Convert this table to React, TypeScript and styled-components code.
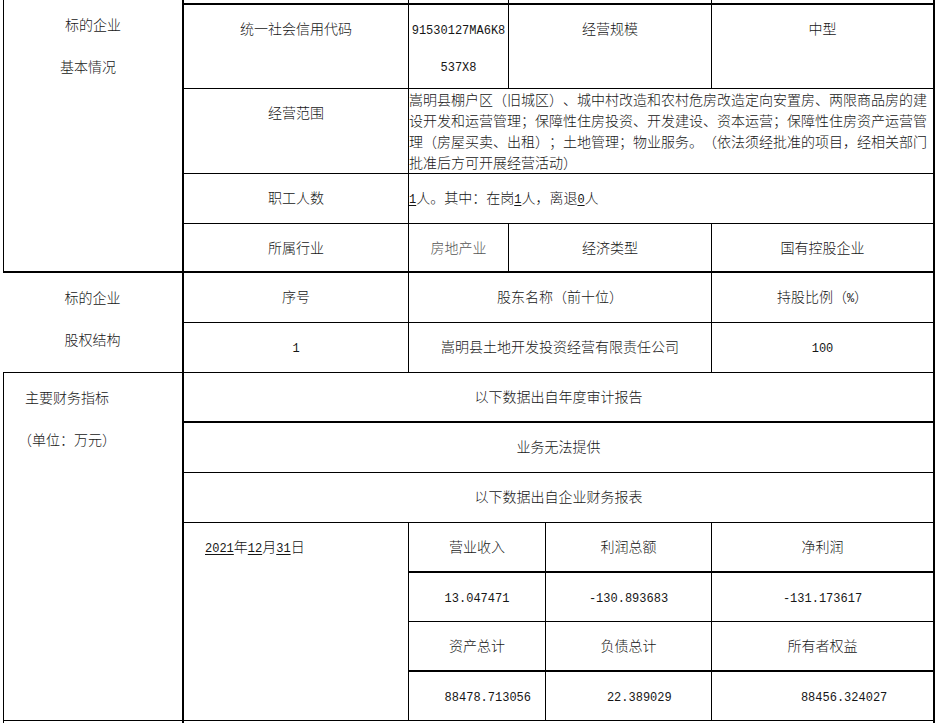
import React from 'react';
import styled, { createGlobalStyle } from 'styled-components';

const Global = createGlobalStyle`
  html, body {
    margin: 0;
    padding: 0;
    background: #ffffff;
    overflow: hidden;
  }
  body {
    font-family: "Noto Sans CJK SC", "Noto Sans", sans-serif;
    font-size: 14px;
    font-weight: 300;
    color: #161616;
    text-spacing-trim: space-all;
  }
`;

const Page = styled.div`
  width: 937px;
  height: 723px;
  box-sizing: border-box;
  padding-left: 3px;
`;

const Sheet = styled.div`
  display: grid;
  grid-template-columns: 181px 225px 100px 37px 166px 223px;
  grid-template-rows: 5px 84px 85px 50px 49px 50px 50px 50px 50px 50px 50px 49px 50px 49px 30px;
`;

type CellProps = {
  $col: string;
  $row: string;
  $left?: number;
  $right?: number;
  $bottom?: number;
};

const Cell = styled.div<CellProps>`
  grid-column: ${p => p.$col};
  grid-row: ${p => p.$row};
  box-sizing: border-box;
  min-width: 0;
  border: 0 solid #000;
  border-left-width: ${p => p.$left ?? 0}px;
  border-right-width: ${p => p.$right ?? 1}px;
  border-bottom-width: ${p => p.$bottom ?? 1}px;
  overflow: hidden;
`;

const Text = styled(Cell)<{ $align?: 'left' | 'center'; $indent?: number }>`
  padding: 6px 0 0 ${p => p.$indent ?? 0}px;
  line-height: 34px;
  text-align: ${p => p.$align ?? 'center'};
  white-space: nowrap;
`;

const Side = styled(Cell)<{ $align?: 'left' | 'center'; $indent?: number }>`
  padding: 3px 0 0 ${p => p.$indent ?? 0}px;
  line-height: 42px;
  text-align: ${p => p.$align ?? 'center'};
  white-space: nowrap;
`;

const SideLine = styled.div<{ $shift?: number }>`
  margin-left: ${p => p.$shift ?? 0}px;
`;

const Prose = styled(Cell)`
  padding: 0;
  line-height: 21px;
  text-align: left;
  white-space: nowrap;
`;

const Num = styled.span<{ $u?: boolean }>`
  font-family: "Liberation Mono", "DejaVu Sans Mono", monospace;
  font-size: 12px;
  font-weight: 400;
  white-space: pre;
  text-decoration: ${p => (p.$u ? 'underline' : 'none')};
  text-underline-offset: 2px;
`;

const Muted = styled.span`
  color: #555;
`;

const Line = styled.div``;

export default function App() {
  return (
    <>
      <Global />
      <Page>
        <Sheet>
          {/* row cut off above the visible area */}
          <Cell $col="2 / 3" $row="1 / 2" $bottom={2} />
          <Cell $col="3 / 4" $row="1 / 2" $bottom={2} />
          <Cell $col="4 / 6" $row="1 / 2" $bottom={2} />
          <Cell $col="6 / 7" $row="1 / 2" $bottom={2} $right={2} />

          {/* 标的企业 基本情况 */}
          <Side $col="1 / 2" $row="1 / 6" $left={1} $right={2} $bottom={2}>
            <SideLine>标的企业</SideLine>
            <SideLine $shift={-10}>基本情况</SideLine>
          </Side>

          <Text $col="2 / 3" $row="2 / 3">统一社会信用代码</Text>
          <Text $col="3 / 4" $row="2 / 3">
            <Line><Num>91530127MA6K8</Num></Line>
            <Line><Num>537X8</Num></Line>
          </Text>
          <Text $col="4 / 6" $row="2 / 3">经营规模</Text>
          <Text $col="6 / 7" $row="2 / 3" $right={2}>中型</Text>

          <Text $col="2 / 3" $row="3 / 4">经营范围</Text>
          <Prose $col="3 / 7" $row="3 / 4" $right={2}>
            <Line>嵩明县棚户区（旧城区）、城中村改造和农村危房改造定向安置房、两限商品房的建</Line>
            <Line>设开发和运营管理；保障性住房投资、开发建设、资本运营；保障性住房资产运营管</Line>
            <Line>理（房屋买卖、出租）；土地管理；物业服务。（依法须经批准的项目，经相关部门</Line>
            <Line>批准后方可开展经营活动）</Line>
          </Prose>

          <Text $col="2 / 3" $row="4 / 5">职工人数</Text>
          <Text $col="3 / 7" $row="4 / 5" $right={2} $align="left">
            <Num $u>1</Num>人。其中：在岗<Num $u>1</Num>人，离退<Num $u>0</Num>人
          </Text>

          <Text $col="2 / 3" $row="5 / 6" $bottom={2}>所属行业</Text>
          <Text $col="3 / 4" $row="5 / 6" $bottom={2}><Muted>房地产业</Muted></Text>
          <Text $col="4 / 6" $row="5 / 6" $bottom={2}>经济类型</Text>
          <Text $col="6 / 7" $row="5 / 6" $bottom={2} $right={2}>国有控股企业</Text>

          {/* 标的企业 股权结构 */}
          <Side $col="1 / 2" $row="6 / 8" $right={2}>
            <SideLine>标的企业</SideLine>
            <SideLine>股权结构</SideLine>
          </Side>

          <Text $col="2 / 3" $row="6 / 7">序号</Text>
          <Text $col="3 / 6" $row="6 / 7">股东名称（前十位）</Text>
          <Text $col="6 / 7" $row="6 / 7" $right={2}>持股比例（<Num>%</Num>）</Text>

          <Text $col="2 / 3" $row="7 / 8"><Num>1</Num></Text>
          <Text $col="3 / 6" $row="7 / 8">嵩明县土地开发投资经营有限责任公司</Text>
          <Text $col="6 / 7" $row="7 / 8" $right={2}><Num>100</Num></Text>

          {/* 主要财务指标 */}
          <Side $col="1 / 2" $row="8 / 15" $left={1} $right={2} $align="left" $indent={21}>
            <SideLine>主要财务指标</SideLine>
            <SideLine $shift={-7}>（单位：万元）</SideLine>
          </Side>

          <Text $col="2 / 7" $row="8 / 9" $right={2} $bottom={2}>以下数据出自年度审计报告</Text>
          <Text $col="2 / 7" $row="9 / 10" $right={2}>业务无法提供</Text>
          <Text $col="2 / 7" $row="10 / 11" $right={2}>以下数据出自企业财务报表</Text>

          <Text $col="2 / 3" $row="11 / 15" $align="left" $indent={21}>
            <Num $u>2021</Num>年<Num $u>12</Num>月<Num $u>31</Num>日
          </Text>

          <Text $col="3 / 5" $row="11 / 12" $bottom={2}>营业收入</Text>
          <Text $col="5 / 6" $row="11 / 12" $bottom={2}>利润总额</Text>
          <Text $col="6 / 7" $row="11 / 12" $bottom={2} $right={2}>净利润</Text>

          <Text $col="3 / 5" $row="12 / 13"><Num>13.047471</Num></Text>
          <Text $col="5 / 6" $row="12 / 13"><Num>-130.893683</Num></Text>
          <Text $col="6 / 7" $row="12 / 13" $right={2}><Num>-131.173617</Num></Text>

          <Text $col="3 / 5" $row="13 / 14" $bottom={2}>资产总计</Text>
          <Text $col="5 / 6" $row="13 / 14" $bottom={2}>负债总计</Text>
          <Text $col="6 / 7" $row="13 / 14" $bottom={2} $right={2}>所有者权益</Text>

          <Text $col="3 / 5" $row="14 / 15"><Num>{'   88478.713056'}</Num></Text>
          <Text $col="5 / 6" $row="14 / 15"><Num>{'   22.389029'}</Num></Text>
          <Text $col="6 / 7" $row="14 / 15" $right={2}><Num>{'      88456.324027'}</Num></Text>

          {/* next row, cut off below */}
          <Cell $col="1 / 2" $row="15 / 16" $left={1} $right={2} $bottom={0} />
          <Cell $col="2 / 7" $row="15 / 16" $right={2} $bottom={0} />
        </Sheet>
      </Page>
    </>
  );
}
